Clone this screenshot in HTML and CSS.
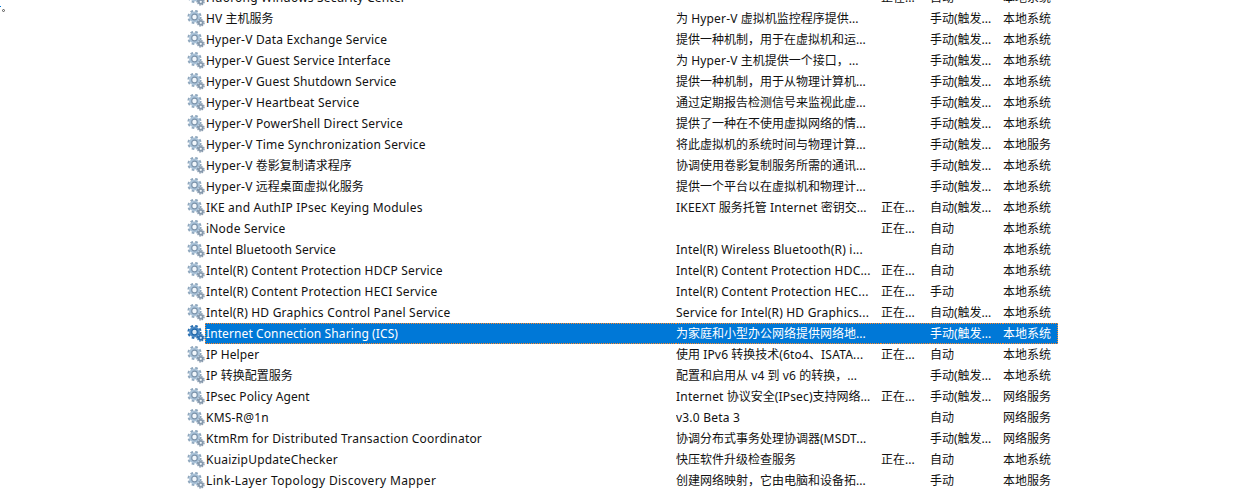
FILE: index.html
```html
<!DOCTYPE html>
<html lang="zh-CN">
<head>
  <meta charset="UTF-8" />
  <title>服务</title>
  <link rel="stylesheet" href="styles.css">
</head>
<body>
  <svg class="defs" width="0" height="0">
    <symbol id="gear" viewBox="0 0 18 18">
      <circle class="g-teeth" cx="7.5" cy="7" r="6.1" stroke-width="2" stroke-dasharray="2.6 2.19" fill="none" />
      <circle class="g-disc" cx="7.5" cy="7" r="5.4" />
      <circle class="g-hole" cx="7.5" cy="7" r="2.8" stroke-width="1.2" />
      <circle class="g-teeth2" cx="13.8" cy="12.8" r="3.3" stroke-width="1.2" stroke-dasharray="1.5 1.09" fill="none" />
      <circle class="g-disc2" cx="13.8" cy="12.8" r="2.9" />
      <circle class="g-hole2" cx="13.8" cy="12.8" r="1.1" />
    </symbol>
  </svg>

  <span class="stray-tick"></span>
  <span class="stray-dot"></span>

  <table class="services">
    <tbody>
      <tr><td class="ico"><svg><use href="#gear" /></svg></td><td class="name en">Huorong Windows Security Center</td><td></td><td class="status">正在...</td><td>自动</td><td>本地系统</td></tr>
      <tr><td class="ico"><svg><use href="#gear" /></svg></td><td class="name"><span class="en">HV</span> 主机服务</td><td>为 <span class="en">Hyper-V</span> 虚拟机监控程序提供...</td><td class="status"></td><td>手动(触发...</td><td>本地系统</td></tr>
      <tr><td class="ico"><svg><use href="#gear" /></svg></td><td class="name en">Hyper-V Data Exchange Service</td><td>提供一种机制，用于在虚拟机和运...</td><td class="status"></td><td>手动(触发...</td><td>本地系统</td></tr>
      <tr><td class="ico"><svg><use href="#gear" /></svg></td><td class="name en">Hyper-V Guest Service Interface</td><td>为 <span class="en">Hyper-V</span> 主机提供一个接口，...</td><td class="status"></td><td>手动(触发...</td><td>本地系统</td></tr>
      <tr><td class="ico"><svg><use href="#gear" /></svg></td><td class="name en">Hyper-V Guest Shutdown Service</td><td>提供一种机制，用于从物理计算机...</td><td class="status"></td><td>手动(触发...</td><td>本地系统</td></tr>
      <tr><td class="ico"><svg><use href="#gear" /></svg></td><td class="name en">Hyper-V Heartbeat Service</td><td>通过定期报告检测信号来监视此虚...</td><td class="status"></td><td>手动(触发...</td><td>本地系统</td></tr>
      <tr><td class="ico"><svg><use href="#gear" /></svg></td><td class="name en">Hyper-V PowerShell Direct Service</td><td>提供了一种在不使用虚拟网络的情...</td><td class="status"></td><td>手动(触发...</td><td>本地系统</td></tr>
      <tr><td class="ico"><svg><use href="#gear" /></svg></td><td class="name en">Hyper-V Time Synchronization Service</td><td>将此虚拟机的系统时间与物理计算...</td><td class="status"></td><td>手动(触发...</td><td>本地服务</td></tr>
      <tr><td class="ico"><svg><use href="#gear" /></svg></td><td class="name"><span class="en">Hyper-V</span> 卷影复制请求程序</td><td>协调使用卷影复制服务所需的通讯...</td><td class="status"></td><td>手动(触发...</td><td>本地系统</td></tr>
      <tr><td class="ico"><svg><use href="#gear" /></svg></td><td class="name"><span class="en">Hyper-V</span> 远程桌面虚拟化服务</td><td>提供一个平台以在虚拟机和物理计...</td><td class="status"></td><td>手动(触发...</td><td>本地系统</td></tr>
      <tr><td class="ico"><svg><use href="#gear" /></svg></td><td class="name en">IKE and AuthIP IPsec Keying Modules</td><td><span class="en">IKEEXT</span> 服务托管 <span class="en">Internet</span> 密钥交...</td><td class="status">正在...</td><td>自动(触发...</td><td>本地系统</td></tr>
      <tr><td class="ico"><svg><use href="#gear" /></svg></td><td class="name en">iNode Service</td><td></td><td class="status">正在...</td><td>自动</td><td>本地系统</td></tr>
      <tr><td class="ico"><svg><use href="#gear" /></svg></td><td class="name en-tight">Intel Bluetooth Service</td><td class="en">Intel(R) Wireless Bluetooth(R) i...</td><td class="status"></td><td>自动</td><td>本地系统</td></tr>
      <tr><td class="ico"><svg><use href="#gear" /></svg></td><td class="name en">Intel(R) Content Protection HDCP Service</td><td class="en">Intel(R) Content Protection HDC...</td><td class="status">正在...</td><td>自动</td><td>本地系统</td></tr>
      <tr><td class="ico"><svg><use href="#gear" /></svg></td><td class="name en">Intel(R) Content Protection HECI Service</td><td class="en">Intel(R) Content Protection HEC...</td><td class="status">正在...</td><td>手动</td><td>本地系统</td></tr>
      <tr><td class="ico"><svg><use href="#gear" /></svg></td><td class="name en">Intel(R) HD Graphics Control Panel Service</td><td class="en">Service for Intel(R) HD Graphics...</td><td class="status">正在...</td><td>自动(触发...</td><td>本地系统</td></tr>
      <tr class="selected"><td class="ico"><svg><use href="#gear" /></svg></td><td class="name en-tight">Internet Connection Sharing (ICS)</td><td>为家庭和小型办公网络提供网络地...</td><td class="status"></td><td>手动(触发...</td><td>本地系统</td></tr>
      <tr><td class="ico"><svg><use href="#gear" /></svg></td><td class="name en-tight">IP Helper</td><td>使用 <span class="en">IPv6</span> 转换技术(<span class="en">6to4</span>、<span class="en">ISATA...</span></td><td class="status">正在...</td><td>自动</td><td>本地系统</td></tr>
      <tr><td class="ico"><svg><use href="#gear" /></svg></td><td class="name"><span class="en">IP</span> 转换配置服务</td><td>配置和启用从 <span class="en">v4</span> 到 <span class="en">v6</span> 的转换，...</td><td class="status"></td><td>手动(触发...</td><td>本地系统</td></tr>
      <tr><td class="ico"><svg><use href="#gear" /></svg></td><td class="name en-tight">IPsec Policy Agent</td><td><span class="en">Internet</span> 协议安全(<span class="en">IPsec</span>)支持网络...</td><td class="status">正在...</td><td>手动(触发...</td><td>网络服务</td></tr>
      <tr><td class="ico"><svg><use href="#gear" /></svg></td><td class="name en">KMS-R@1n</td><td class="en">v3.0 Beta 3</td><td class="status"></td><td>自动</td><td>网络服务</td></tr>
      <tr><td class="ico"><svg><use href="#gear" /></svg></td><td class="name en">KtmRm for Distributed Transaction Coordinator</td><td>协调分布式事务处理协调器(<span class="en">MSDT...</span></td><td class="status"></td><td>手动(触发...</td><td>网络服务</td></tr>
      <tr><td class="ico"><svg><use href="#gear" /></svg></td><td class="name en">KuaizipUpdateChecker</td><td>快压软件升级检查服务</td><td class="status">正在...</td><td>自动</td><td>本地系统</td></tr>
      <tr><td class="ico"><svg><use href="#gear" /></svg></td><td class="name en-wide">Link-Layer Topology Discovery Mapper</td><td>创建网络映射，它由电脑和设备拓...</td><td class="status"></td><td>手动</td><td>本地服务</td></tr>
    </tbody>
  </table>
</body>
</html>
```

FILE: styles.css
```css
html, body {
  margin: 0;
  height: 492px;
  overflow: hidden;
  background-color: white;
}
body {
  position: relative;
  font-family: "Noto Sans", "Noto Sans CJK SC", sans-serif;
  font-size: 12px;
  color: #111;
}
.defs {
  display: block;
  height: 0;
}
.stray-tick {
  position: absolute;
  left: 0;
  top: 6px;
  width: 1px;
  height: 1px;
  background-color: #0078d7;
}
.stray-dot {
  position: absolute;
  left: 2px;
  top: 9px;
  width: 3px;
  height: 3px;
  box-sizing: border-box;
  border: 1px solid #555;
  border-radius: 50%;
}
.services {
  margin: -13px 0 0 187px;
  border-spacing: 0;
  table-layout: fixed;
  width: 871px;
}
.services td {
  height: 21px;
  padding: 0;
  box-sizing: border-box;
  white-space: nowrap;
  overflow: hidden;
  line-height: 21px;
}
.services td:nth-child(1) { width: 18px; }
.services td:nth-child(2) { width: 471px; }
.services td:nth-child(3) { width: 205px; }
.services td:nth-child(4) { width: 49px; }
.services td:nth-child(5) { width: 73px; }
.services td:nth-child(6) { width: 55px; }
.en {
  letter-spacing: 0.2px;
}
.en-tight {
  letter-spacing: 0.1px;
}
.en-wide {
  letter-spacing: 0.36px;
}
.ico svg {
  display: block;
  width: 18px;
  height: 18px;
  --g1: #8fa7bd;
  --g2: #a9c2d8;
  --g3: #f1f6fb;
  --g4: #7c94ab;
  --g5: #8598ac;
}
.services .name {
  padding-left: 1px;
}
.g-teeth { stroke: var(--g1); }
.g-disc { fill: var(--g2); }
.g-hole { fill: var(--g3); stroke: var(--g4); }
.g-teeth2 { stroke: var(--g5); }
.g-disc2 { fill: var(--g5); }
.g-hole2 { fill: var(--g3); }
.selected td {
  background-color: #0078d7;
  color: white;
  border-top: 1px dotted #ff8728;
  border-bottom: 1px dotted #ff8728;
  line-height: 19px;
}
.selected td:last-child {
  border-right: 1px dotted #ff8728;
}
.selected .name {
  border-left: 1px dotted #ff8728;
}
.services .selected .name {
  padding-left: 0;
}
.services .selected .ico {
  background-color: white;
  border: none;
}
.selected .ico svg {
  --g1: #2a6fb0;
  --g2: #4b8ac6;
  --g3: #dbe8f5;
  --g4: #1f66a8;
  --g5: #2a6fb0;
}
```
